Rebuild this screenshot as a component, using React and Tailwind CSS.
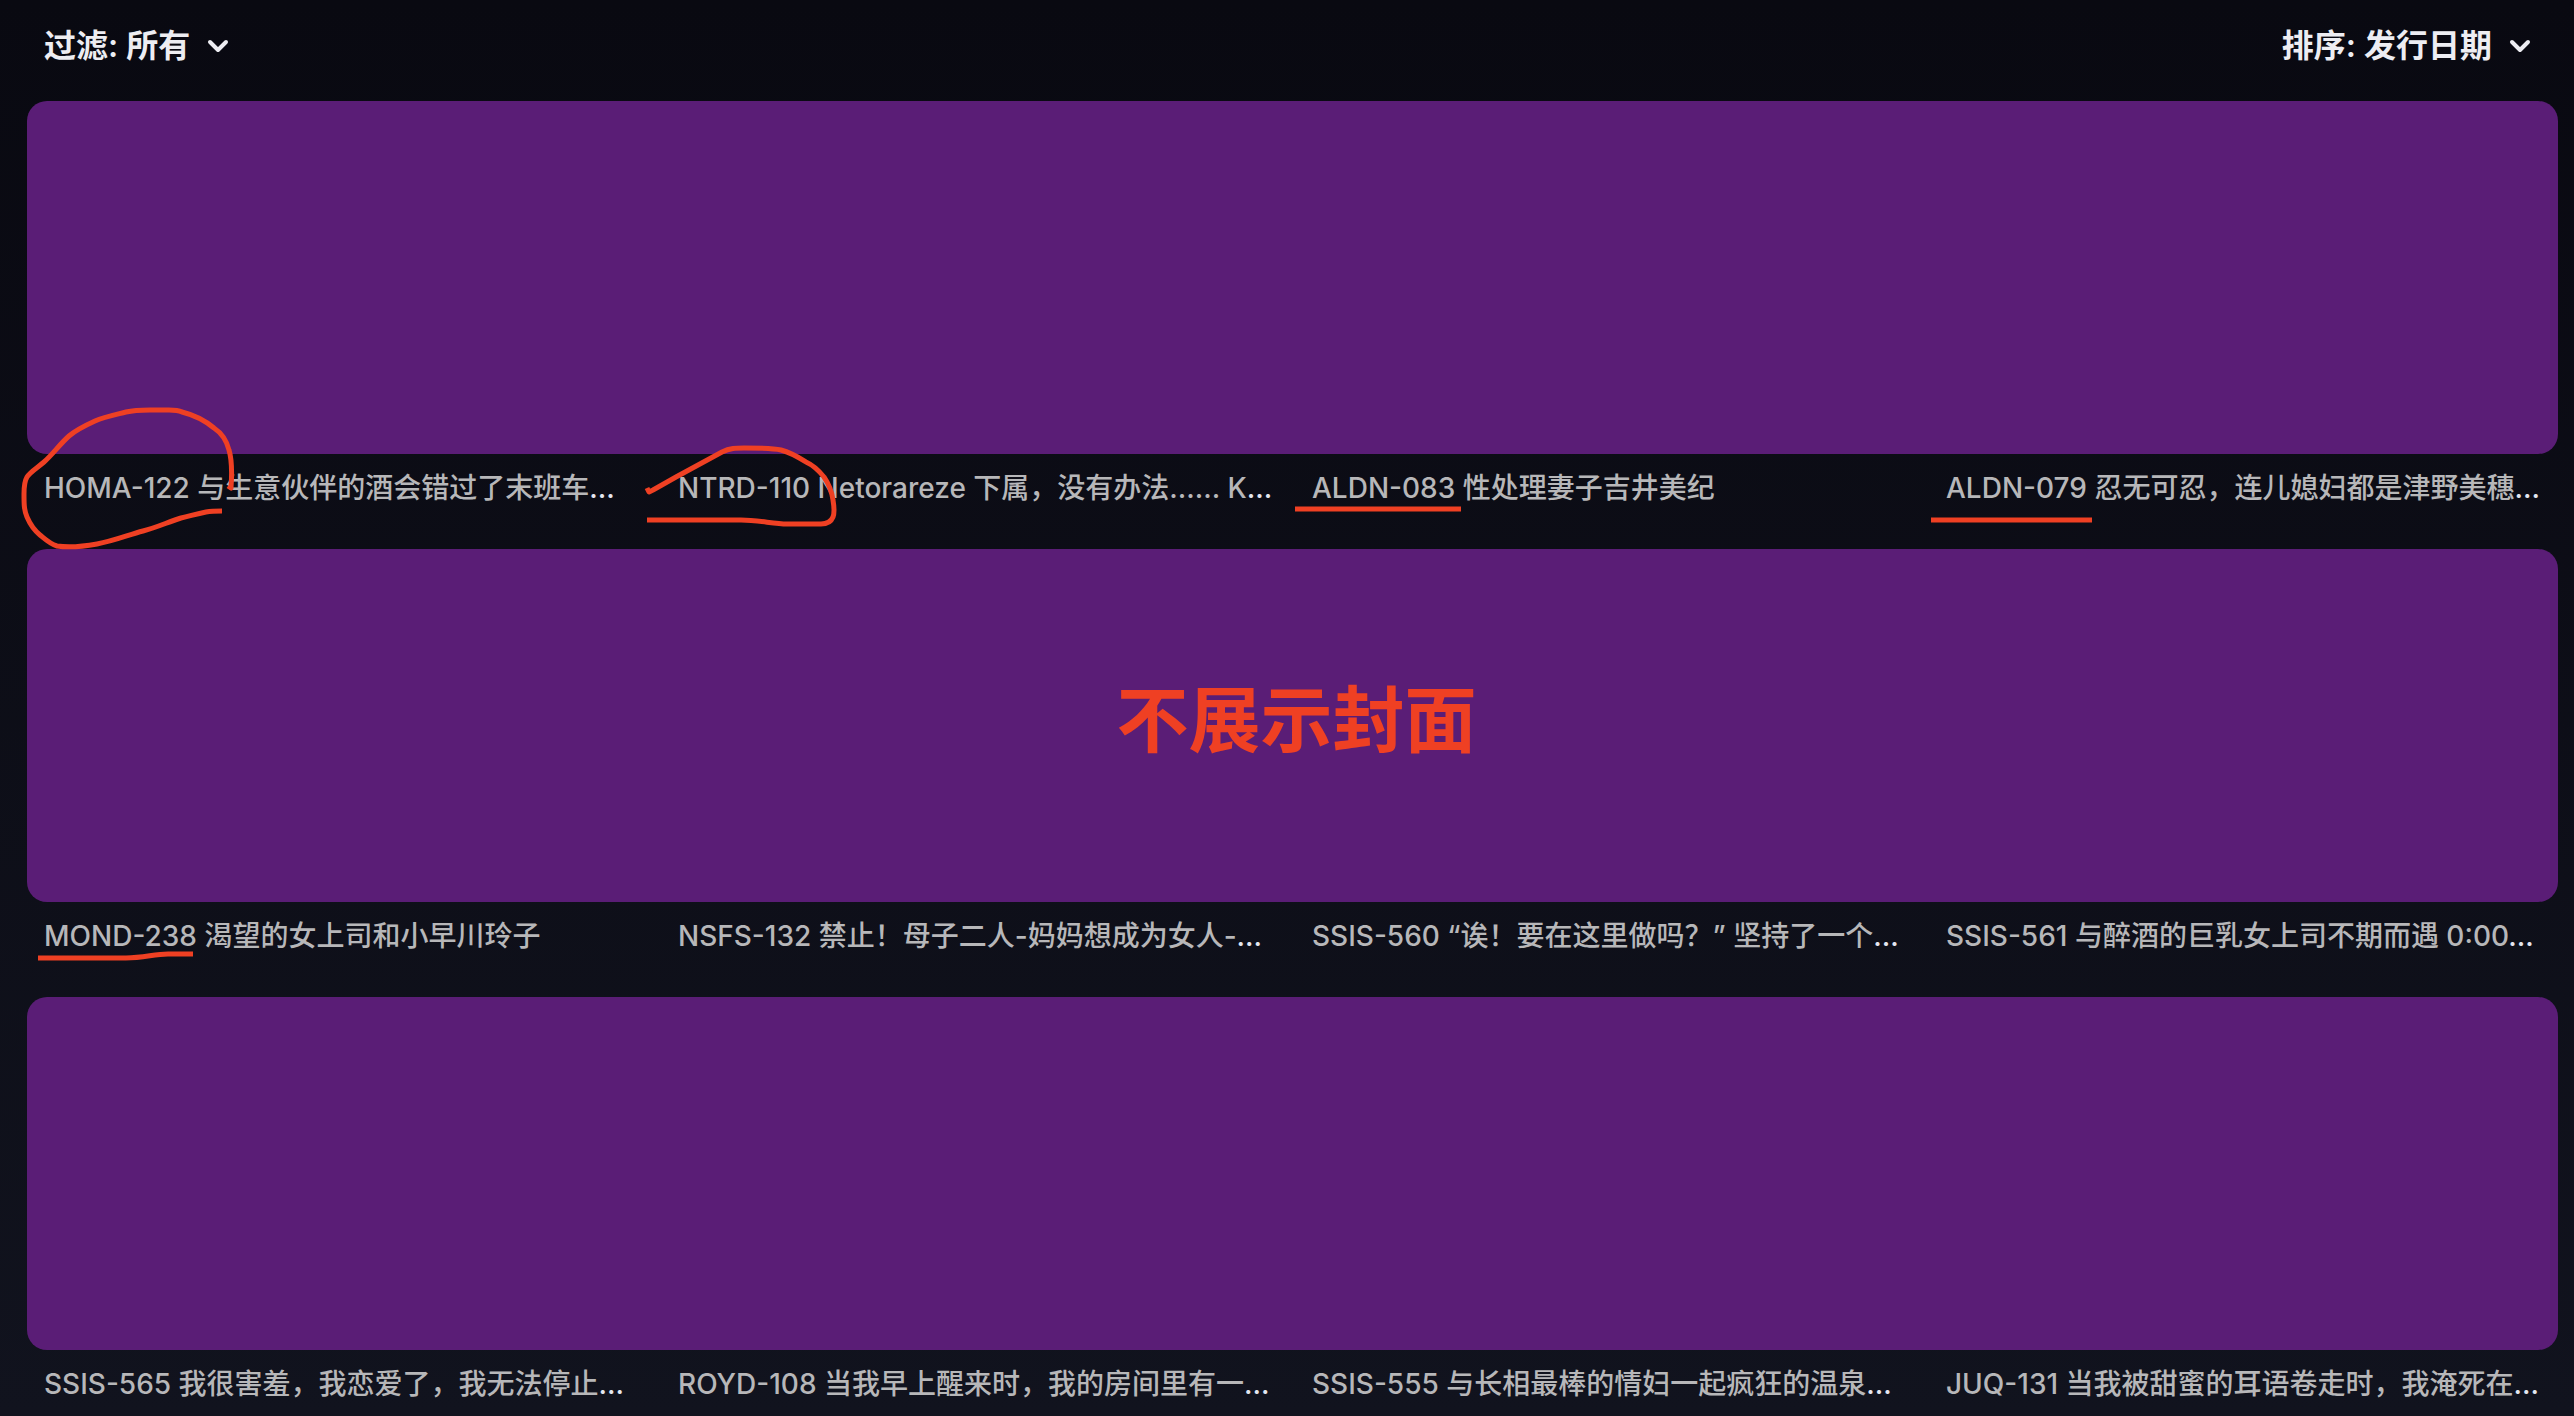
import { ChevronDown } from "lucide-react";

const rows = [
  {
    id: "row-1",
    videos: [
      { code: "HOMA-122", title: "与生意伙伴的酒会错过了末班车", cut: true, mark: "circle" },
      { code: "NTRD-110", title: "Netorareze 下属，没有办法...... K", cut: true, mark: "loop" },
      { code: "ALDN-083", title: "性处理妻子吉井美纪", mark: "underline" },
      { code: "ALDN-079", title: "忍无可忍，连儿媳妇都是津野美穗", cut: true, mark: "lowUnderline" },
    ],
  },
  {
    id: "row-2",
    note: "不展示封面",
    videos: [
      { code: "MOND-238", title: "渴望的女上司和小早川玲子", mark: "wave" },
      { code: "NSFS-132", title: "禁止！母子二人-妈妈想成为女人-", cut: true },
      { code: "SSIS-560", title: "“诶！要在这里做吗？” 坚持了一个", cut: true },
      { code: "SSIS-561", title: "与醉酒的巨乳女上司不期而遇 0:00", cut: true },
    ],
  },
  {
    id: "row-3",
    videos: [
      { code: "SSIS-565", title: "我很害羞，我恋爱了，我无法停止", cut: true },
      { code: "ROYD-108", title: "当我早上醒来时，我的房间里有一", cut: true },
      { code: "SSIS-555", title: "与长相最棒的情妇一起疯狂的温泉", cut: true },
      { code: "JUQ-131", title: "当我被甜蜜的耳语卷走时，我淹死在", cut: true },
    ],
  },
];

// Pen strokes, measured from just above the top left corner of a title
const marks = {
  circle:
    "M184 20 L187 22 C188 8 188 -6 185 -16 C182 -28 176 -34 170 -38 C158 -48 146 -52 138 -54 C132 -57 126 -56 118 -56 C104 -56 94 -57 82 -54 C70 -51 60 -49 51 -45 C40 -40 32 -36 25 -30 C16 -22 8 -11 0 -4 C-7 2 -14 6 -17 11 C-20 16 -20 22 -20 28 C-20 38 -20 44 -17 51 C-14 58 -10 64 -4 69 C2 74 6 78 13 80 C26 82 42 80 53 78 C70 75 84 69 99 65 C114 61 124 56 137 52 C146 50 152 48 162 46 C168 45 172 45 178 45",
  loop:
    "M-31 22 L-29 26 L-25 24 L-2 11 L44 -14 C52 -18 58 -18 66 -18 C80 -18 94 -18 103 -16 C114 -13 120 -9 128 -4 C137 0 142 6 146 11 C152 20 154 26 155 34 C156 40 157 46 155 51 C153 56 149 58 143 58 L109 58 C96 58 80 54 63 54 L-31 54",
  underline: "M-17 43 H149",
  lowUnderline: "M-15 54 H146",
  wave: "M-6 44 H82 C100 44 110 40 124 40 H149",
};

function Picker({ id, label, options }) {
  return (
    <div className="flex items-center gap-3">
      <div className="flex items-center gap-2">
        <label htmlFor={id}>{label}</label>
        <select
          id={id}
          className="appearance-none bg-transparent field-sizing-content outline-none"
        >
          {options.map((option) => (
            <option key={option}>{option}</option>
          ))}
        </select>
      </div>
      <ChevronDown className="size-8" strokeWidth={3} aria-hidden="true" />
    </div>
  );
}

function PenMark({ name }) {
  return (
    <svg
      className="absolute left-0 -top-0.5 size-1 overflow-visible pointer-events-none"
      fill="none"
      stroke="#ef4023"
      strokeWidth="5"
      strokeLinejoin="round"
      aria-hidden="true"
    >
      <path d={marks[name]} />
    </svg>
  );
}

function VideoTitle({ video }) {
  return (
    <div className="relative whitespace-nowrap text-[28px] leading-10 font-medium text-[#e4e6f0]">
      <a href={`#${video.code}`} className="text-[#b7b7b9]">
        {video.code} {video.title}
      </a>
      {video.cut && "…"}
      {video.mark && <PenMark name={video.mark} />}
    </div>
  );
}

export default function App() {
  return (
    <div className="min-h-screen overflow-hidden bg-linear-to-b from-[#090911] to-[#11131e] font-['Inter','Noto_Sans_CJK_SC',sans-serif]">
      <header className="flex items-center justify-between pl-11 pr-[38px] pt-[22px] pb-[31px] text-[32px] leading-12 font-semibold text-[#ededf2]">
        <Picker id="filter" label="过滤:" options={["所有"]} />
        <Picker id="sort" label="排序:" options={["发行日期"]} />
      </header>

      <main className="flex flex-col gap-[41px]">
        {rows.map((row) => (
          <section key={row.id}>
            <div className="ml-[27px] mr-4 flex h-[353px] items-center justify-center rounded-[20px] bg-[#5a1d76]">
              {row.note && (
                <p className="pb-3 pl-2 text-[72px] leading-none font-bold text-[#ef4023]">
                  {row.note}
                </p>
              )}
            </div>
            <div className="grid grid-cols-4 gap-8 pt-3.5 pl-11 pr-[26px]">
              {row.videos.map((video) => (
                <VideoTitle key={video.code} video={video} />
              ))}
            </div>
          </section>
        ))}
      </main>
    </div>
  );
}
